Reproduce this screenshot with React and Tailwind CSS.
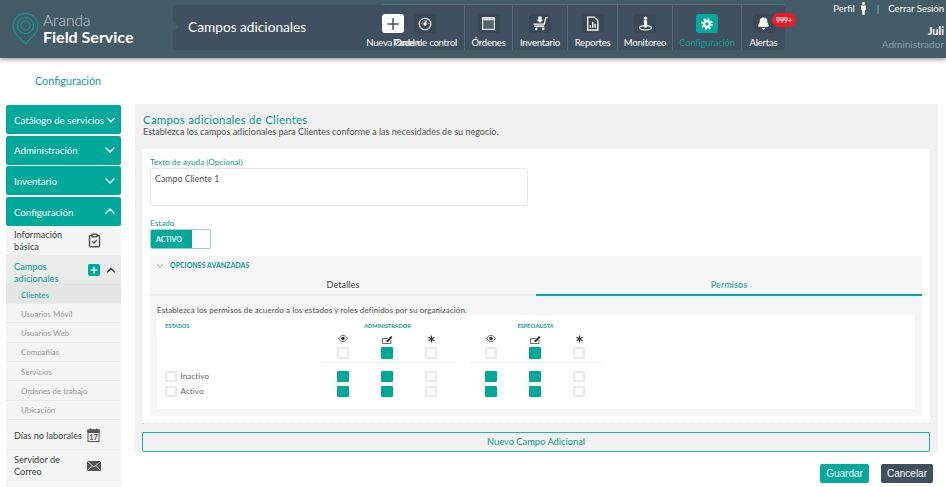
import React from "react";
import { ChevronDown, ChevronUp, Plus, Bell, ClipboardCheck } from "lucide-react";

const I = ({ children, size = 14 }) => (
  <svg width={size} height={size} viewBox="0 0 14 14" fill="none" stroke="white" strokeWidth="1.1">{children}</svg>
);

const GaugeI = (
  <I><circle cx="7" cy="7" r="5.8" /><path d="M7 7 L8.6 3.6" strokeWidth="1.3" /><circle cx="7" cy="7" r="1.1" fill="white" /><path d="M3.4 6.6h.9M4.6 4.2l.6.6M7 3v.8M10 6.6h.9" strokeWidth="0.9" /></I>
);
const WindowI = (
  <I size={15}><rect x="1.5" y="1.5" width="11" height="11" stroke="#e4e4e4" fill="#53646f" /><rect x="2" y="2" width="10" height="2" fill="#e4e4e4" stroke="none" /></I>
);
const CartI = (
  <I size={15}><path d="M5 .5h3v3h1.6L6.5 6.2 3.4 3.5H5z" fill="white" stroke="none" /><path d="M.5 7.5h10L12 1.5h1.5" strokeWidth="1.2" /><path d="M1 9.5h9.5" strokeWidth="1.4" /><circle cx="3" cy="12" r="1.3" fill="white" stroke="none" /><circle cx="9.5" cy="12" r="1.3" fill="white" stroke="none" /></I>
);
const ReportI = (
  <I size={15}><path d="M2.5 1h6l3.5 3.5V13h-9.500z" strokeWidth="1.3" /><path d="M5 11V8.500M7.200 11V5.500M9.400 11V7.500" strokeWidth="1.300" /></I>
);
const MonitorI = (
  <I size={15}><circle cx="7" cy="2" r="1.500" fill="white" stroke="none" /><path d="M5.500 4h3v4.500l-.6 2.500H6.100l-.6-2.500z" fill="white" stroke="none" /><ellipse cx="7" cy="11" rx="5.500" ry="2" fill="none" strokeWidth="1" /></I>
);
const GearI = (
  <I size={14}><circle cx="7" cy="7" r="3" strokeWidth="2.400" /><circle cx="7" cy="7" r="5" strokeWidth="1.800" strokeDasharray="1.960 1.960" /></I>
);
const PersonI = (
  <svg width="7" height="13" viewBox="0 0 7 13" fill="white"><circle cx="3.500" cy="1.500" r="1.400" /><path d="M1 3.500h5v4.500H5l-.5 5h-2L2 8H1z" /></svg>
);

const Nav = ({ w, center, label, icon, active, ml, border = true, children }) => (
  <div className={`relative flex flex-col items-center pt-[9px] ${w} ${ml || ""} ${border ? "border-r border-[#546774]" : ""}`}>
    <div className={`flex h-[22px] w-[22px] items-center justify-center rounded-[3px] ${active ? "bg-[#00a99a]" : center ? "bg-white" : "bg-[#394a56]"}`}>{icon}</div>
    <span className={`mt-[3px] whitespace-nowrap text-[9.5px] leading-[14px] tracking-[-0.2px] ${active ? "text-[#0f9c8f]" : "text-white"}`}>{label}</span>
    {children}
  </div>
);

const SideHead = ({ label, up }) => (
  <div className="flex h-[29px] items-center justify-between rounded-[2px] bg-[#00a99a] pl-[8px] pr-[3px] text-[9.7px] text-white">
    <span className="whitespace-nowrap pt-[1px]">{label}</span>
    {up ? <ChevronUp size={16} strokeWidth={2.2} /> : <ChevronDown size={16} strokeWidth={2.2} />}
  </div>
);

const SubLink = ({ label, active }) => (
  <div className={`flex h-[19.3px] items-center border-b border-[#e9ebeb] pl-[15px] pt-[3px] text-[7.9px] ${active ? "bg-[#e4e6e6] text-[#0f9c8f]" : "text-[#9a9a9a]"}`}>{label}</div>
);

const Box = ({ on }) => (
  <span className={`block h-[11.5px] w-[11.5px] rounded-[1px] ${on ? "bg-[#00a896]" : "border-2 border-[#e9e9e9] bg-white"}`} />
);

const Cell = ({ children }) => <div className="flex w-[44px] justify-center">{children}</div>;

const Group = ({ cols, ml }) => (
  <div className={`flex w-[133px] ${ml || ""}`}>
    {cols.map((c, i) => <Cell key={i}>{c}</Cell>)}
  </div>
);

const EyeI = (
  <svg width="10" height="7" viewBox="0 0 10 7" fill="none" stroke="#444" strokeWidth="0.800"><path d="M.5 3.500C2 1 3.500.5 5 .5s3 .5 4.500 3C8 6 6.500 6.500 5 6.500S2 6 .5 3.500z" /><circle cx="5" cy="3.500" r="1.800" fill="#333" stroke="none" /></svg>
);
const EditI = (
  <svg width="11" height="9" viewBox="0 0 11 9" fill="none" stroke="#444" strokeWidth="0.800"><path d="M.5 3.500h5M.5 3.500v5h8.500V5" /><path d="M4.500 5.500L9 1l1.500 1.500L6 7H4.500z" fill="#333" stroke="none" /></svg>
);
const StarI = (
  <svg width="7" height="8" viewBox="0 0 7 8" stroke="#333" strokeWidth="1.200"><path d="M3.500 .5v7M.5 2.200l6 3.600M6.500 2.200l-6 3.600" /></svg>
);

const Row = ({ label, a, b, h = "h-[15px]" }) => (
  <div className={`flex items-center ${h}`}>
    <div className="flex w-[164px] items-center pl-[8px]">
      <Box />
      <span className="ml-[4px] -mt-[1px] text-[8px] tracking-[0.1px] text-[#666]">{label}</span>
    </div>
    <Group cols={a.map((v, i) => <Box key={i} on={v} />)} />
    <Group ml="ml-[15px]" cols={b.map((v, i) => <Box key={i} on={v} />)} />
  </div>
);

export default function App() {
  return (
    <div className="h-[487px] w-[946px] overflow-hidden bg-white font-['Lato','Noto_Sans',sans-serif] text-[#444]">
      <header className="flex h-[58px] bg-[#445b68] shadow-[0_2px_4px_rgba(0,0,0,0.35)]">
        <div className="flex w-[173px] items-center pl-[12px]">
          <svg width="27" height="32" viewBox="0 0 27 32" fill="none" stroke="#0f9c8f" strokeWidth="1.100">
            <path d="M13.500 31 L4 21 A12.500 12.500 0 1 1 23 21 Z" />
            <circle cx="13.500" cy="12.500" r="8" />
            <circle cx="13.500" cy="12.500" r="4.500" />
          </svg>
          <div className="ml-[4px] text-white">
            <div className="text-[15.5px] leading-[15px] font-light text-[#c3ccd1]">Aranda</div>
            <div className="text-[16px] leading-[17px] font-bold whitespace-nowrap">Field Service</div>
          </div>
        </div>
        <div className="relative mt-[5px] flex h-[45px] w-[612px] rounded-[3px] bg-[#3f5160]">
          <span className="absolute left-[-4px] top-[18px] h-[8px] w-[8px] rotate-45 bg-[#445b68]" />
          <div className="flex w-[209px] items-center pb-[1px] pl-[15px] text-[13.7px] text-white">Campos adicionales</div>
          <div className="-mt-[1px] flex border-t border-[#5a6d79]">
            <Nav w="w-[22px]" center border={false} label="Nueva Orden" icon={<Plus size={18} className="text-[#3f5160]" />} />
            <Nav w="w-[42px]" border={false} label="Panel de control" icon={GaugeI} />
            <div className="ml-[18px] flex border-l border-[#546774]">
              <Nav w="w-[48px]" label="Órdenes" icon={WindowI} />
              <Nav w="w-[55px]" label="Inventario" icon={CartI} />
              <Nav w="w-[50px]" label="Reportes" icon={ReportI} />
              <Nav w="w-[55px]" label="Monitoreo" icon={MonitorI} />
              <Nav w="w-[69px]" active label="Configuración" icon={GearI} />
              <Nav w="w-[43px]" border={false} label="Alertas" icon={<Bell size={13} className="text-white" fill="white" />}>
                <span className="absolute left-[30px] top-[8px] rounded-full bg-[#ed1c24] px-[4px] text-[7px] leading-[14px] font-bold text-white">999+</span>
              </Nav>
            </div>
          </div>
        </div>
        <div className="flex flex-1 flex-col items-end pr-[2px] pt-[2px] text-[9.5px] text-white">
          <div className="flex items-center whitespace-nowrap leading-[13px]">
            <span>Perfil</span>
            <span className="ml-[5px]">{PersonI}</span>
            <span className="ml-[10px] mr-[9px] text-[#9fc4d0]">|</span>
            <span>Cerrar Sesión</span>
          </div>
          <div className="mt-[9px] text-[11px] leading-[13px] font-bold">Juli</div>
          <div className="mt-[1px] text-[10px] leading-[13px] text-[#8b9aa4]">Administrador</div>
        </div>
      </header>

      <div className="flex h-[46px] items-center pl-[35px] text-[10.8px] text-[#0f9c8f]">Configuración</div>

      <div className="flex">
        <aside className="ml-[6px] mt-[1px] flex w-[115px] shrink-0 flex-col gap-[1.6px]">
          <SideHead label="Catálogo de servicios" />
          <SideHead label="Administración" />
          <SideHead label="Inventario" />
          <div>
            <SideHead label="Configuración" up />
            <div className="flex h-[30px] items-center justify-between border-b border-[#e9ebeb] bg-[#f4f5f5] pl-[8px] pr-[19px] text-[9.2px] leading-[12px]">
              <span className="pt-[2px]">Información<br />básica</span>
              <ClipboardCheck size={15} strokeWidth={2.400} className="text-[#555]" />
            </div>
            <div className="flex h-[29px] items-center justify-between border-b border-[#dfe1e1] bg-[#e9ebeb] pl-[8px] pr-[3px] text-[9.2px] leading-[12px] text-[#0f9c8f]">
              <span className="pt-[6px]">Campos<br />adicionales</span>
              <span className="flex items-center gap-[4px]">
                <span className="flex h-[12px] w-[12px] items-center justify-center rounded-[2px] bg-[#00a99a]"><Plus size={10} strokeWidth={3} className="text-white" /></span>
                <ChevronUp size={14} strokeWidth={2.400} className="text-[#444]" />
              </span>
            </div>
            <div className="bg-[#f4f5f5]">
              <SubLink label="Clientes" active />
              <SubLink label="Usuarios Móvil" />
              <SubLink label="Usuarios Web" />
              <SubLink label="Compañías" />
              <SubLink label="Servicios" />
              <SubLink label="Ordenes de trabajo" />
              <SubLink label="Ubicación" />
            </div>
            <div className="flex h-[30px] items-center justify-between border-b border-[#eee] bg-[#f4f5f5] pl-[8px] pr-[21px] pt-[2px] text-[9.1px] whitespace-nowrap">
              <span>Días no laborales</span>
              <svg width="13" height="14" viewBox="0 0 13 14" fill="none" stroke="#555">
                <rect x="1" y="2" width="11" height="11.500" />
                <rect x="1" y="2" width="11" height="2.500" fill="#555" />
                <path d="M3.500 .5v2M9.500 .5v2" strokeWidth="1.300" />
                <text x="6.500" y="12" textAnchor="middle" fontSize="7.500" fontWeight="700" fill="#555" stroke="none">17</text>
              </svg>
            </div>
            <div className="flex h-[31px] items-center justify-between border-b border-[#eee] bg-[#f4f5f5] pl-[8px] pr-[20px] pt-[2px] text-[9.2px] leading-[11.5px]">
              <span>Servidor de<br />Correo</span>
              <svg width="14" height="10" viewBox="0 0 14 10"><rect width="14" height="10" rx="1" fill="#555" /><path d="M.5 .5L7 6l6.500-5.500M.5 9.500L5 4.500M13.500 9.500L9 4.500" stroke="#f4f5f5" strokeWidth="0.800" fill="none" /></svg>
            </div>
            <div className="h-[20px] bg-[#f4f5f5]" />
          </div>
        </aside>

        <main className="ml-[14px] w-[803px]">
          <section className="h-[348px] bg-[#f1f1f1] pl-[7px] pr-[8px]">
            <div className="h-[45px] pl-[1px] pt-[9px]">
              <h1 className="text-[11.5px] leading-[13px] tracking-[0.2px] text-[#0f9c8f]">Campos adicionales de Clientes</h1>
              <p className="text-[9px] leading-[12px] text-[#555]">Establezca los campos adicionales para Clientes conforme a las necesidades de su negocio.</p>
            </div>
            <div className="h-[275px] border-b border-dotted border-[#ddd] bg-white px-[8px] pt-[8px]">
              <label className="block text-[8.2px] leading-[11px] text-[#0f9c8f]">Texto de ayuda (Opcional)</label>
              <div className="h-[38px] w-[378px] rounded-[2px] border border-[#e6e6e6] px-[4px] py-[3px] text-[8.8px] text-[#555]">Campo Cliente 1</div>
              <label className="mt-[12px] block text-[8.2px] leading-[11px] text-[#0f9c8f]">Estado</label>
              <div className="flex h-[20px] w-[61px] overflow-hidden rounded-[2px] border border-[#8fd5cd]">
                <div className="flex w-[41px] items-center bg-[#00a99a] pl-[5px] text-[7px] font-bold text-white">ACTIVO</div>
              </div>
              <div className="mt-[7px] h-[160px] w-[772px] bg-[#f6f6f6]">
                <div className="flex h-[19px] items-center pl-[5px] text-[7px] font-bold text-[#0f9c8f]">
                  <ChevronDown size={10} className="mr-[5px] text-[#888]" />
                  OPCIONES AVANZADAS
                </div>
                <div className="flex h-[21px]">
                  <div className="flex w-[386px] items-center justify-center border-b-2 border-[#ececec] pt-[1px] text-[9px] tracking-[0.1px] text-[#444]">Detalles</div>
                  <div className="flex w-[386px] items-center justify-center border-b-2 border-[#00a99a] pt-[1px] text-[9px] tracking-[0.1px] text-[#0f9c8f]">Permisos</div>
                </div>
                <p className="flex h-[19px] items-center pl-[7px] pt-[9px] text-[8px] tracking-[0.1px] text-[#555]">Establezca los permisos de acuerdo a los estados y roles definidos por su organización.</p>
                <div className="ml-[7px] h-[94px] w-[758px] bg-white pt-[7px]">
                  <div className="flex h-[9px] items-center text-[5.500px] font-bold text-[#0f9c8f]">
                    <div className="w-[164px] pl-[8px]">ESTADOS</div>
                    <div className="w-[133px] text-center">ADMINISTRADOR</div>
                    <div className="ml-[15px] w-[133px] text-center">ESPECIALISTA</div>
                  </div>
                  <div className="mt-[2px] flex h-[12px] items-center">
                    <div className="w-[164px]" />
                    <Group cols={[EyeI, EditI, StarI]} />
                    <Group ml="ml-[15px]" cols={[EyeI, EditI, StarI]} />
                  </div>
                  <div className="mt-[1px] flex h-[14px] items-center">
                    <div className="w-[164px]" />
                    <Group cols={[<Box />, <Box on />, <Box />]} />
                    <Group ml="ml-[15px]" cols={[<Box />, <Box on />, <Box />]} />
                  </div>
                  <div className="mt-[2px] flex h-[7px] items-start">
                    <div className="w-[164px]" />
                    <div className="w-[133px] border-t border-[#eee]" />
                    <div className="ml-[15px] w-[133px] border-t border-[#eee]" />
                  </div>
                  <Row label="Inactivo" a={[true, true, false]} b={[true, true, false]} />
                  <Row label="Activo" a={[true, true, false]} b={[true, true, false]} />
                </div>
              </div>
            </div>
            <div className="mt-[8px] flex h-[20px] items-center justify-center rounded-[2px] border border-[#1fb5a6] text-[9.300px] text-[#0f9c8f]">Nuevo Campo Adicional</div>
          </section>
          <div className="mt-[12px] flex justify-end gap-[12px] pr-[5px] font-['Liberation_Sans',sans-serif]">
            <button className="h-[19px] w-[49px] rounded-[2px] bg-[#00a99a] text-[10px] text-white">Guardar</button>
            <button className="h-[19px] w-[52px] rounded-[2px] bg-[#3f5160] text-[10px] text-white">Cancelar</button>
          </div>
        </main>
      </div>
    </div>
  );
}
